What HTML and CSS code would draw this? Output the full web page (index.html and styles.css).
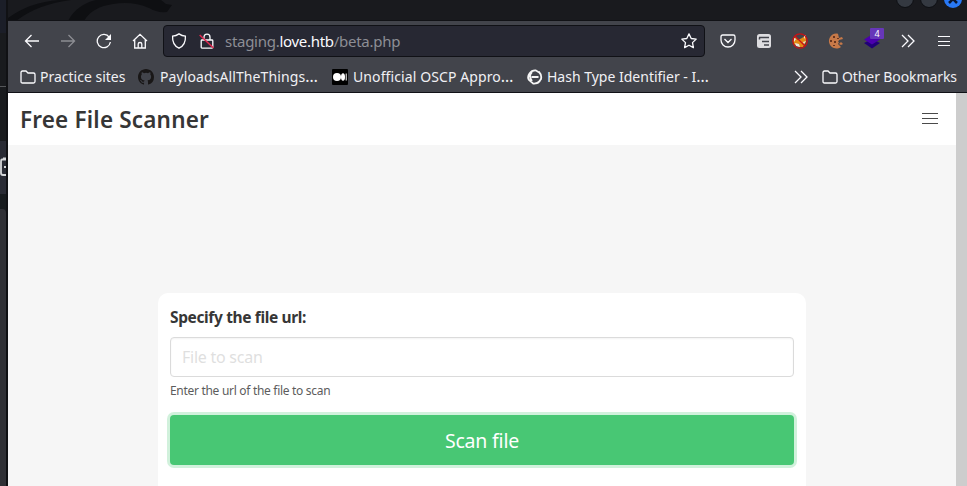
FILE: index.html
```html
<!DOCTYPE html>
<html lang="en">
<head>
<meta charset="utf-8">
<title>Free File Scanner</title>
<link rel="stylesheet" href="styles.css">
</head>
<body>
<div class="desktop">
<aside class="backdrop">
  <div class="b1"></div><div class="b2"></div>
  <div class="b3"><svg width="7" height="20" viewBox="0 0 7 20"><path d="M7 2.500H2Q1 2.500 1 5v11q0 2 2 2h4M3 1.500h3M4 10h3" fill="none" stroke="#d5d7d9" stroke-width="1.800"/></svg></div>
  <div class="b4"></div><div class="b5"></div>
</aside>
<div class="window">
  <header class="titlebar">
    <svg class="art" width="170" height="21" viewBox="0 0 170 21"><path d="M0 18Q22 2 51 0H63Q30 4 8 21H0zM60 21Q68 5 88 0H153L158 4L164 5L159 12Q149 13 141 8Q125 1 105 4Q84 7 76 21z" fill="#0e0f12"/></svg>
    <div class="controls"><i></i><i></i><i class="close"><svg width="18" height="18" viewBox="0 0 18 18"><path d="M5 5l8 8M13 5l-8 8" stroke="#0b1730" stroke-width="2.5"/></svg></i></div>
  </header>
  <div class="toolbar">
    <nav class="nav">
      <svg width="16" height="16" viewBox="0 0 16 16"><path d="M15 8H1.500M7.500 2L1.500 8l6 6"/></svg>
      <svg class="dim" width="16" height="16" viewBox="0 0 16 16"><path d="M1 8h13.500M8.500 2l6 6-6 6"/></svg>
      <svg width="16" height="16" viewBox="0 0 16 16"><path d="M13.300 4.300A6.600 6.600 0 1 0 14.400 9"/><path d="M15 1v6H9z" fill="#fbfbfe" stroke="none"/></svg>
      <svg width="16" height="16" viewBox="0 0 16 16"><path d="M1 8l7-6.700L15 8M2.700 7v8h10.600V7M6.200 15v-4q0-1.500 1.800-1.500t1.800 1.500v4"/></svg>
    </nav>
    <div class="urlbar">
      <svg width="16" height="16" viewBox="0 0 16 16"><path d="M8 .9Q11 3 14.400 3.200C14.800 9 12.500 13 8 15.200 3.500 13 1.200 9 1.600 3.200 5 3 8 .9 8 .9z"/></svg>
      <svg class="lock" width="16" height="16" viewBox="0 0 16 16"><path d="M5 7V4.200q0-3 3-3t3 3V7M3 7h10q.8 0 .8.800v6.500q0 .8-.8.800H3q-.8 0-.8-.8V7.800Q2.200 7 3 7z"/><path d="M.7 2l13.800 13" stroke="#e22850" stroke-width="1.600"/></svg>
      <span class="address">staging.<b>love.htb</b>/beta.php</span>
      <svg class="star" width="16" height="16" viewBox="0 0 16 16"><path d="M8 .9l2.200 4.600 5 .6-3.700 3.500.9 5L8 12.200 3.600 14.600l.9-5L.8 6.100l5-.6z" stroke-linejoin="round"/></svg>
    </div>
    <div class="extensions">
      <svg width="16" height="16" viewBox="0 0 16 16"><path d="M2.700 2h10.600q1.700 0 1.700 1.700V7a7 7 0 0 1-14 0V3.700Q1 2 2.700 2zM4.500 6L8 9.500 11.500 6"/></svg>
      <svg width="16" height="16" viewBox="0 0 16 16"><rect x="1" y="1" width="14" height="14" rx="2.500" fill="#dddde0" stroke="none"/><path d="M3 4.500h10M6 8.500h7M8 12h5M3.500 4.500v2" stroke="#42444b" stroke-width="1.500"/></svg>
      <svg width="16" height="16" viewBox="0 0 16 16"><path d="M1 8l2-4 3 3 4-2 4-3v7l-3 5H7l-5-3z" fill="#e28a14" stroke="none"/><path d="M2 5l2 1-2 3zM3 10l4 1 1 3-4-1zM12 2l2 1-2 3zM11 9l3-1-2 3z" fill="#e9e4df" stroke="none"/><circle cx="8" cy="8" r="7.200" stroke="#cc1015"/><path d="M3 3l10 10" stroke="#cc1015"/></svg>
      <svg width="16" height="16" viewBox="0 0 16 16"><path d="M10 .7A7.500 7.500 0 1 0 13 14l-3-3 1-2h-1l1-2 4-1-1-2-3 1z" fill="#c77948" stroke="none"/><path d="M5 3h2v2H5zM2 7h2v2H2zM6 8h2v2H6zM5 12h2v1H5zM9 5h2v1H9z" fill="#68351f" stroke="none"/><path d="M13 9l2 2-2 1-2-1z" fill="#c77948" stroke="none"/></svg>
      <div class="layers"><svg width="16" height="16" viewBox="0 0 16 16"><path d="M0 10l8-4 8 4-8 5.500z" fill="#210078" stroke="none"/><path d="M0 6.500l8-5 8 5-8 5z" fill="#4b00ad" stroke="none"/></svg><span class="badge">4</span></div>
      <svg width="16" height="16" viewBox="0 0 16 16"><path d="M2 2l6 6-6 6M8 2l6 6-6 6"/></svg>
      <svg class="crisp" width="16" height="16" viewBox="0 0 16 16"><path d="M2 3.500h12M2 8.500h12M2 12.500h12"/></svg>
    </div>
  </div>
  <div class="bookmarks">
    <div class="bm w1"><svg width="16" height="16" viewBox="0 0 16 16"><path d="M1 3.500q0-1.500 1.500-1.500H6l2 2h5.500Q15 4 15 5.500v7q0 1.500-1.500 1.500h-11Q1 14 1 12.500z"/></svg><span>Practice sites</span></div>
    <div class="bm w2"><svg width="16" height="16" viewBox="0 0 16 16"><path d="M8 0C3.580 0 0 3.580 0 8c0 3.540 2.290 6.530 5.470 7.590.4.070.55-.17.55-.38v-1.490c-2.010.37-2.530-.49-2.690-.94-.09-.23-.48-.94-.82-1.130-.28-.15-.68-.52-.01-.53.63-.01 1.080.58 1.230.82.72 1.210 1.870.87 2.330.66.07-.52.28-.87.51-1.070-1.780-.2-3.640-.89-3.640-3.950 0-.87.31-1.590.82-2.150-.08-.2-.36-1.020.08-2.120 0 0 .67-.21 2.200.82a7.600 7.600 0 0 1 4 0c1.530-1.040 2.200-.82 2.200-.82.44 1.100.16 1.920.08 2.120.51.560.82 1.270.82 2.150 0 3.070-1.870 3.750-3.650 3.950.29.25.54.73.54 1.480v2.200c0 .21.150.46.550.38A8 8 0 0 0 16 8c0-4.420-3.580-8-8-8z" fill="#191717" stroke="none"/></svg><span>PayloadsAllTheThings<span class="dots">…</span></span></div>
    <div class="bm w3"><svg width="16" height="16" viewBox="0 0 16 16"><rect width="16" height="16" rx="1" fill="#000" stroke="none"/><g fill="#fff" stroke="none"><circle cx="5" cy="8" r="4"/><ellipse cx="11" cy="8" rx="2" ry="3.800"/><rect x="13.700" y="4.500" width="1" height="7"/></g></svg><span>Unofficial OSCP Appro<span class="dots">…</span></span></div>
    <div class="bm w4"><svg width="16" height="16" viewBox="0 0 16 16"><path d="M13 4L9 1.500Q5 1 2.500 4.500T2 11l4 3.500q4 .5 7-2.500M4.500 8h7M12 3q3 3 2 7l-3 4M5 3Q1 7 5 12" stroke="#f5f5f5" stroke-width="1.800"/></svg><span>Hash Type Identifier - I<span class="dots">…</span></span></div>
    <svg class="more" width="16" height="16" viewBox="0 0 16 16"><path d="M2 2l6 6-6 6M8 2l6 6-6 6"/></svg>
    <div class="bm w5"><svg width="16" height="16" viewBox="0 0 16 16"><path d="M1 3.500q0-1.500 1.500-1.500H6l2 2h5.500Q15 4 15 5.500v7q0 1.500-1.500 1.500h-11Q1 14 1 12.500z"/></svg><span>Other Bookmarks</span></div>
  </div>
  <div class="viewport">
    <main class="page">
      <header class="navbar"><h1>Free File Scanner</h1><div class="burger"><i></i><i></i><i></i></div></header>
      <form class="box">
        <label for="file">Specify the file url:</label>
        <input id="file" type="text" placeholder="File to scan">
        <p>Enter the url of the file to scan</p>
        <button type="button"><span>Scan file</span></button>
      </form>
    </main>
    <div class="scrollbar"></div>
  </div>
</div>
</div>
</body>
</html>
```
FILE: styles.css
```css
* { box-sizing: border-box; }
body { margin: 0; overflow: hidden; font-family: "Noto Sans", sans-serif; }
svg { display: block; flex: none; fill: none; stroke: #fbfbfe; stroke-width: 1.3; }
.desktop { display: flex; width: 967px; height: 486px; }
.backdrop { width: 8px; flex: none; background: #191c1f; border-right: 2px solid #101114; }
.b1 { height: 33px; background: #1b1e28; }
.b2 { height: 108px; background: linear-gradient(#191b1e 53px, #55575a 53px, #55575a 54px, #191b1e 54px); }
.b3 { height: 53px; background: #292b34; padding-top: 16px; overflow: hidden; }
.b4 { height: 15px; background: #171b1e; }
.b5 { height: 277px; background: #303136; border-radius: 0 4px 0 0; }
.window { flex: 1; display: flex; flex-direction: column; min-width: 0; }
.titlebar { height: 21px; flex: none; display: flex; justify-content: space-between; background: #191a1e; border-bottom: 1px solid #111216; overflow: hidden; }
.art { stroke: none; }
.controls { display: flex; gap: 6px; padding-right: 5px; margin-top: -10px; }
.controls i { width: 18px; height: 18px; border-radius: 50%; background: #343941; border: 1px solid #0d0f13; }
.controls .close { background: #2878f4; border: 0; }
.toolbar { height: 40px; flex: none; display: flex; background: #42444b; align-items: center; }
.nav { display: flex; width: 155px; padding-left: 16px; gap: 20px; }
.dim { opacity: .4; }
.urlbar { width: 542px; height: 32px; display: flex; align-items: center; padding: 0 7px; background: #272833; border: 1px solid #101116; border-radius: 4px; }
.lock { margin-left: 12px; }
.address { margin-left: 10px; font-size: 15px; line-height: 22px; color: #8d8e95; white-space: nowrap; letter-spacing: -.28px; }
.address b { font-weight: 400; color: #fbfbfe; }
.star { margin-left: auto; }
.extensions { display: flex; gap: 20px; margin-left: 15px; }
.layers { position: relative; width: 16px; }
.badge { position: absolute; left: 6px; top: -5px; width: 14px; height: 11px; background: #6737b9; border-radius: 1px; color: #fff; font-size: 9px; line-height: 11px; text-align: center; }
.crisp { shape-rendering: crispEdges; }
.bookmarks { height: 32px; flex: none; display: flex; align-items: center; background: #42444b; border-bottom: 1px solid #101116; padding: 0 10px 0 12px; color: #f0f0f4; font-size: 14px; line-height: 20px; }
.bm { display: flex; align-items: center; gap: 4px; white-space: nowrap; flex: none; }
.dots { letter-spacing: 0; font-size: 16px; line-height: 16px; }
.w1 { width: 118px; }
.w2 { width: 194px; gap: 6px; letter-spacing: .1px; }
.w3 { width: 195px; gap: 5px; letter-spacing: .1px; }
.w4 { width: 190px; gap: 4px; }
.more { margin-left: auto; margin-right: 13px; }
.w5 { width: 135px; letter-spacing: -.1px; }
.viewport { flex: 1; display: flex; min-height: 0; }
.page { width: 948px; background: #f6f6f6; display: flex; flex-direction: column; }
.scrollbar { width: 11px; background: #cdcdcd; }
.navbar { height: 52px; flex: none; display: flex; justify-content: space-between; align-items: center; background: #fff; padding: 0 18px 0 12px; }
h1 { margin: 2px 0 0; color: #363636; font-size: 22.500px; line-height: 32px; font-weight: 600; white-space: nowrap; letter-spacing: .18px; }
.burger { display: flex; flex-direction: column; gap: 4px; width: 16px; margin-top: -1px; }
.burger i { height: 1px; background: #4a4a4a; }
.box { display: flex; flex-direction: column; flex: 1; min-height: 0; width: 648px; margin: 148px auto 0 150px; padding: 12px 12px 0; background: #fff; border-radius: 10px 10px 0 0; }
label { height: 24px; margin-bottom: 8px; color: #363636; font-size: 15.500px; line-height: 25px; font-weight: 700; letter-spacing: -.37px; }
input { height: 40px; flex: none; padding: 0 11px; border: 1px solid #dbdbdb; border-radius: 4px; box-shadow: inset 0 1px 2px rgba(10,10,10,.05); font: 16px "Noto Sans", sans-serif; letter-spacing: -.25px; background: #fff; }
input::placeholder { color: #dfdfdf; opacity: 1; }
p { margin: 5px 0 15px; color: #5c5c5c; font-size: 12px; line-height: 18px; letter-spacing: -.3px; }
button { height: 50px; flex: none; border: 0; border-radius: 4px; background: #48c774; box-shadow: 0 0 0 3px rgba(72,199,116,.25); color: #fff; font: 19.500px "Noto Sans", sans-serif; letter-spacing: -.2px; }
```
